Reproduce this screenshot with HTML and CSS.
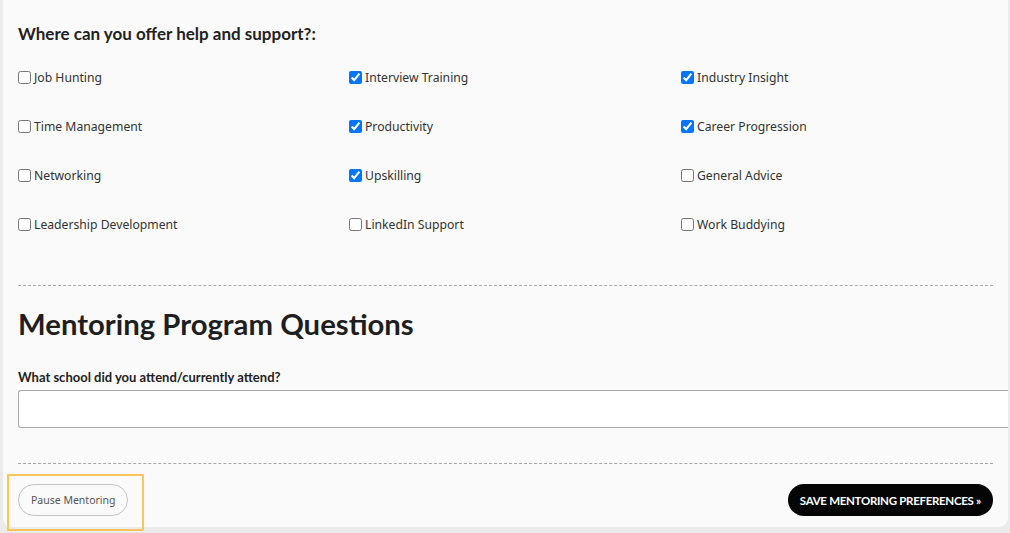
FILE: index.html
```html
<!DOCTYPE html>
<html>
<head>
<meta charset="utf-8">
<link rel="stylesheet" href="styles.css">
</head>
<body>
<div class="card">
  <h3 class="q-title">Where can you offer help and support?:</h3>
  <div class="opts">
    <label class="opt"><input type="checkbox">Job Hunting</label>
    <label class="opt"><input type="checkbox" checked>Interview Training</label>
    <label class="opt"><input type="checkbox" checked>Industry Insight</label>
    <label class="opt"><input type="checkbox">Time Management</label>
    <label class="opt"><input type="checkbox" checked>Productivity</label>
    <label class="opt"><input type="checkbox" checked>Career Progression</label>
    <label class="opt"><input type="checkbox">Networking</label>
    <label class="opt"><input type="checkbox" checked>Upskilling</label>
    <label class="opt"><input type="checkbox">General Advice</label>
    <label class="opt"><input type="checkbox">Leadership Development</label>
    <label class="opt"><input type="checkbox">LinkedIn Support</label>
    <label class="opt"><input type="checkbox">Work Buddying</label>
  </div>
  <hr class="dash">
  <h2 class="section-title">Mentoring Program Questions</h2>
  <label class="field-label" for="school">What school did you attend/currently attend?</label>
  <input class="text-input" id="school" type="text">
  <hr class="dash dash-2">
  <div class="actions">
    <div class="pause-wrap"><button class="btn-pause">Pause Mentoring</button></div>
    <button class="btn-save">SAVE MENTORING PREFERENCES »</button>
  </div>
</div>
</body>
</html>
```

FILE: styles.css
```css
html, body {
  margin: 0;
  padding: 0;
  background: #ebebeb;
  height: 533px;
  overflow: hidden;
}
.card {
  margin-left: 3px;
  width: 1005px;
  height: 527px;
  box-sizing: border-box;
  background: #fafafa;
  border-radius: 0 0 9px 9px;
  padding: 0 0 0 15px;
  font-family: "Noto Sans", sans-serif;
  color: #2a2a2a;
}
.q-title {
  margin: 0;
  padding-top: 23px;
  font-family: Lato, sans-serif;
  font-weight: 700;
  font-size: 17px;
  line-height: 22px;
  color: #222;
}
.opts {
  display: grid;
  grid-template-columns: 331px 332px 332px;
  grid-auto-rows: 49px;
  margin-top: 25px;
}
.opt {
  display: flex;
  align-items: flex-start;
  font-size: 12.2px;
  line-height: 16px;
  color: #333;
}
.opt input {
  margin: 1px 3px 0 0;
  width: 13px;
  height: 13px;
}
.dash {
  border: 0;
  border-top: 1px dashed #a8a8a8;
  margin: 19px 0 0 0;
  width: 975px;
}
.section-title {
  margin: 20px 0 0 0;
  font-family: Lato, sans-serif;
  font-weight: 700;
  font-size: 29.3px;
  line-height: 36px;
  color: #1e1e1e;
}
.field-label {
  display: block;
  margin-top: 27px;
  font-family: Lato, sans-serif;
  font-weight: 700;
  font-size: 13px;
  line-height: 16px;
  color: #222;
}
.text-input {
  display: block;
  margin-top: 5px;
  width: 990px;
  height: 38px;
  box-sizing: border-box;
  border: 1px solid #a9a9a9;
  border-right: 0;
  border-radius: 3px 0 0 3px;
  background: #fff;
}
.dash-2 {
  margin-top: 35px;
}
.actions {
  display: flex;
  justify-content: space-between;
  align-items: flex-start;
  width: 975px;
  margin-top: 10px;
}
.pause-wrap {
  margin-left: -11px;
  padding: 8px 14px 13px 9px;
  border: 2px solid #fbc55a;
  border-radius: 1px;
}
.btn-pause {
  display: block;
  height: 32px;
  padding: 0 12px;
  border: 1px solid #c4c4c4;
  border-radius: 16px;
  background: #fafafa;
  font-family: "Noto Sans", sans-serif;
  font-size: 10.5px;
  color: #555;
}
.btn-save {
  height: 32px;
  padding: 0 12px;
  border: 0;
  border-radius: 16px;
  background: #050505;
  color: #fff;
  font-family: Lato, sans-serif;
  font-weight: 700;
  font-size: 11.5px;
  letter-spacing: -0.3px;
  margin-top: 10px;
}
```
